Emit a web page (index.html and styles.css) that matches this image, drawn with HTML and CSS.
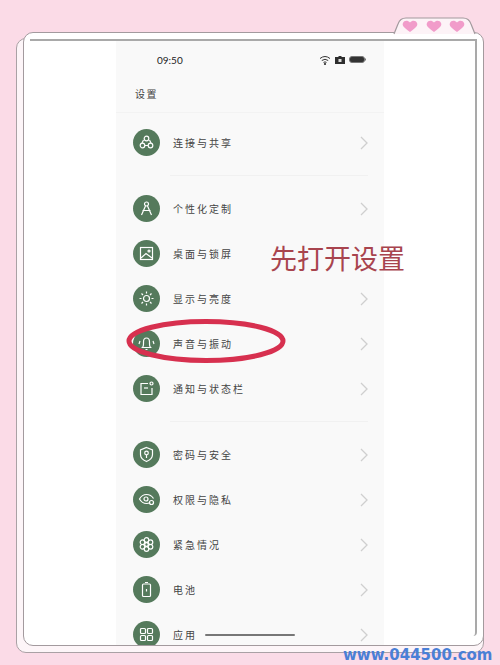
FILE: index.html
```html
<!DOCTYPE html>
<html>
<head>
    <title>设置</title>
    <link rel="stylesheet" href="styles.css">
</head>
<body>

<div class="frame">
  <div class="sheet">
    <svg class="tab" width="84" height="18" viewBox="0 0 84 18">
      <path d="M1 17 L5 7 Q7 1 13 1 H70 Q76 1 78 7 L82 17" fill="#fdf3f7" stroke="#a39a9e" stroke-width="1.2"/>
      <path d="M17 15 C10 10 9 8 10 6 C11 3 15 3 17 5.500 C19 3 23 3 24 6 C25 8 24 10 17 15Z" fill="#f19cca"/>
      <path d="M41 15 C34 10 33 8 34 6 C35 3 39 3 41 5.500 C43 3 47 3 48 6 C49 8 48 10 41 15Z" fill="#f19cca"/>
      <path d="M64 15 C57 10 56 8 57 6 C58 3 62 3 64 5.500 C66 3 70 3 71 6 C72 8 71 10 64 15Z" fill="#f19cca"/>
    </svg>
    <div class="inner">
      <div class="screen">
        <div class="status">
          <span class="time">09:50</span>
          <span class="status-icons">
            <svg width="12" height="10" viewBox="0 0 12 10" fill="none" stroke="#333" stroke-width="1">
              <path d="M1 3.500 Q6 -0.500 11 3.500M2.800 5.500 Q6 3 9.200 5.500M4.500 7.400 Q6 6.400 7.500 7.400"/>
              <circle cx="6" cy="9" r=".7" fill="#333"/>
            </svg>
            <svg width="10" height="8" viewBox="0 0 10 8"><path d="M0 1 H3 L4 0 H6 L7 1 H10 V8 H0Z" fill="#2e2e2e"/><rect x="3.500" y="3" width="3" height="3" fill="#ddd"/></svg>
            <svg width="17" height="7" viewBox="0 0 17 7"><rect x=".5" y=".5" width="15" height="6" rx="2.500" fill="#333" stroke="#777"/><rect x="16" y="2.500" width="1" height="2" fill="#777"/></svg>
          </span>
        </div>
        <div class="title">设置</div>
        <div class="list">
          <div class="row">
            <span class="badge"><svg viewBox="0 0 17 17"><circle cx="8.500" cy="4.500" r="2.300"/><circle cx="4.500" cy="11.500" r="2.300"/><circle cx="12.500" cy="11.500" r="2.300"/><path d="M5.500 6 L4 9M7 11.500 H10M11.500 6 L13 9"/></svg></span>
            <span class="label">连接与共享</span>
            <svg class="arrow" viewBox="0 0 8 14"><path d="M1 1 L7 7 L1 13"/></svg>
          </div>
          <div class="divider"></div>
          <div class="row">
            <span class="badge"><svg viewBox="0 0 17 17"><circle cx="8.500" cy="4" r="2"/><path d="M7.500 6 L3.500 15M9.500 6 L13.500 15M4.500 10.500 H12.500"/></svg></span>
            <span class="label">个性化定制</span>
            <svg class="arrow" viewBox="0 0 8 14"><path d="M1 1 L7 7 L1 13"/></svg>
          </div>
          <div class="row">
            <span class="badge"><svg viewBox="0 0 17 17"><rect x="2.500" y="2.500" width="12" height="12"/><path d="M3 13 L8 8.500 L14 13"/><circle cx="11" cy="6" r="1"/></svg></span>
            <span class="label">桌面与锁屏</span>
          </div>
          <div class="row">
            <span class="badge"><svg viewBox="0 0 17 17"><circle cx="8.500" cy="8.500" r="3"/><path d="M8.500 1.500 V3.500M8.500 13.500 V15.500M1.500 8.500 H3.500M13.500 8.500 H15.500M3.500 3.500 L5 5M12 12 L13.500 13.500M13.500 3.500 L12 5M5 12 L3.500 13.500"/></svg></span>
            <span class="label">显示与亮度</span>
            <svg class="arrow" viewBox="0 0 8 14"><path d="M1 1 L7 7 L1 13"/></svg>
          </div>
          <div class="row">
            <span class="badge"><svg viewBox="0 0 17 17"><path d="M4.500 12.500 Q5.500 11.500 5.500 9 V7 Q5.500 3 8.500 3 Q11.500 3 11.500 7 V9 Q11.500 11.500 12.500 12.500Z"/><path d="M7.500 14.500 H9.500M2 6 L1 9M15 6 L16 9"/></svg></span>
            <span class="label">声音与振动</span>
            <svg class="arrow" viewBox="0 0 8 14"><path d="M1 1 L7 7 L1 13"/></svg>
          </div>
          <div class="row">
            <span class="badge"><svg viewBox="0 0 17 17"><path d="M10 3.500 H3 V14.500 H14 V8"/><path d="M6 8 H10"/><circle cx="13.500" cy="3.500" r="1.500"/></svg></span>
            <span class="label">通知与状态栏</span>
            <svg class="arrow" viewBox="0 0 8 14"><path d="M1 1 L7 7 L1 13"/></svg>
          </div>
          <div class="divider"></div>
          <div class="row">
            <span class="badge"><svg viewBox="0 0 17 17"><path d="M8.500 1.500 L14.500 4 V8.500 Q14.500 13 8.500 15.500 Q2.500 13 2.500 8.500 V4Z"/><circle cx="8.500" cy="7" r="1.800"/><path d="M8.500 8.800 V12"/></svg></span>
            <span class="label">密码与安全</span>
            <svg class="arrow" viewBox="0 0 8 14"><path d="M1 1 L7 7 L1 13"/></svg>
          </div>
          <div class="row">
            <span class="badge"><svg viewBox="0 0 17 17"><path d="M12 11.500 Q10.500 12.500 8.500 12.500 Q4 12.500 1.500 8 Q4 3.500 8.500 3.500 Q13 3.500 15.500 7.500"/><circle cx="8" cy="8" r="2"/><circle cx="13.500" cy="11.500" r="2"/></svg></span>
            <span class="label">权限与隐私</span>
            <svg class="arrow" viewBox="0 0 8 14"><path d="M1 1 L7 7 L1 13"/></svg>
          </div>
          <div class="row">
            <span class="badge"><svg viewBox="0 0 17 17"><circle cx="8.500" cy="8.500" r="1.800"/><circle cx="8.500" cy="4" r="2.300"/><circle cx="8.500" cy="13" r="2.300"/><circle cx="4.500" cy="6.200" r="2.300"/><circle cx="12.500" cy="6.200" r="2.300"/><circle cx="4.500" cy="10.800" r="2.300"/><circle cx="12.500" cy="10.800" r="2.300"/></svg></span>
            <span class="label">紧急情况</span>
            <svg class="arrow" viewBox="0 0 8 14"><path d="M1 1 L7 7 L1 13"/></svg>
          </div>
          <div class="row">
            <span class="badge"><svg viewBox="0 0 17 17"><rect x="4.500" y="3" width="8" height="12.500" rx="1"/><path d="M7 1.500 H10M8.500 8 V10.500" /></svg></span>
            <span class="label">电池</span>
            <svg class="arrow" viewBox="0 0 8 14"><path d="M1 1 L7 7 L1 13"/></svg>
          </div>
          <div class="row">
            <span class="badge"><svg viewBox="0 0 17 17"><rect x="2.500" y="2.500" width="5" height="5" rx="1"/><rect x="9.500" y="2.500" width="5" height="5" rx="1"/><rect x="2.500" y="9.500" width="5" height="5" rx="1"/><rect x="9.500" y="9.500" width="5" height="5" rx="1"/></svg></span>
            <span class="label">应用</span>
            <svg class="arrow" viewBox="0 0 8 14"><path d="M1 1 L7 7 L1 13"/></svg>
          </div>
        </div>
        <div class="home-bar"></div>
      </div>
    </div>
  </div>
</div>

<div class="note">先打开设置</div>
<svg class="oval" width="166" height="50" viewBox="0 0 166 50">
  <ellipse cx="83" cy="25" rx="77" ry="19.500" fill="none" stroke="#d7304f" stroke-width="5"/>
</svg>
<div class="watermark">www.044500.com</div>

</body>
</html>
```

FILE: styles.css
```css
html, body {
    margin: 0;
    height: 665px;
    overflow: hidden;
}
body {
    position: relative;
    background-color: #fbdbe7;
    font-family: "Noto Sans CJK SC", "Noto Sans", sans-serif;
}

/* back sheet of the paper frame */
.frame {
    position: absolute;
    top: 38px;
    left: 16px;
    width: 466px;
    height: 613px;
    border: 1.500px solid #aaa1a5;
    border-radius: 10px;
    background-color: #fdf5f8;
}
.sheet {
    position: absolute;
    top: -7px;
    left: 6px;
    right: -1px;
    bottom: 6px;
    border: 1.500px solid #a39a9e;
    border-radius: 10px;
    background-color: white;
}
.tab {
    position: absolute;
    top: -16px;
    right: 6px;
}
.inner {
    box-sizing: border-box;
    height: 597px;
    margin: 6px 6px 0 6px;
    border-top: 2px solid #a9a9a9;
    border-right: 2px solid #a9a9a9;
    border-bottom-right-radius: 4px;
    display: flex;
    justify-content: center;
    padding-right: 5px;
}

.screen {
    width: 268px;
    height: 604px;
    position: relative;
    background-color: #f9f9f9;
    overflow: hidden;
    color: #444;
}
.status {
    height: 37px;
    display: flex;
    align-items: center;
    justify-content: space-between;
    padding: 0 18px 0 41px;
}
.time {
    font-family: Lato, sans-serif;
    font-size: 10px;
    color: #222;
}
.status-icons {
    display: flex;
    align-items: center;
    gap: 4px;
}
.title {
    height: 34px;
    line-height: 32px;
    padding-left: 19px;
    font-size: 10px;
    letter-spacing: 1.500px;
    border-bottom: 1px solid #f3f3f3;
}
.list {
    padding-top: 7px;
}
.row {
    height: 45px;
    display: flex;
    align-items: center;
    padding: 0 16px 0 17px;
}
.badge {
    width: 27px;
    height: 27px;
    border-radius: 50%;
    background-color: #557a5c;
    display: flex;
    align-items: center;
    justify-content: center;
    flex-shrink: 0;
}
.badge svg {
    width: 17px;
    height: 17px;
    fill: none;
    stroke: white;
    stroke-width: 1.200;
}
.label {
    margin-left: 13px;
    font-size: 10px;
    letter-spacing: 2px;
    flex: 1;
}
.arrow {
    width: 8px;
    height: 14px;
    fill: none;
    stroke: #cfcfcf;
    stroke-width: 1.300;
}
.divider {
    height: 21px;
    margin: 0 16px 0 54px;
    background: linear-gradient(#f1f1f1, #f1f1f1) center / 100% 1px no-repeat;
}
.home-bar {
    position: absolute;
    left: 89px;
    top: 593px;
    width: 90px;
    height: 2px;
    border-radius: 1px;
    background-color: #777;
}

/* things drawn on top of the screenshot */
.note {
    position: absolute;
    top: 238px;
    left: 270px;
    font-size: 27px;
    line-height: 40px;
    color: #a8444e;
    white-space: nowrap;
}
.oval {
    position: absolute;
    top: 316px;
    left: 123px;
}
.watermark {
    position: absolute;
    top: 646px;
    left: 343px;
    font-family: "DejaVu Sans", sans-serif;
    font-weight: bold;
    font-size: 15px;
    line-height: 18px;
    color: #4a7fd6;
    white-space: nowrap;
}
```
